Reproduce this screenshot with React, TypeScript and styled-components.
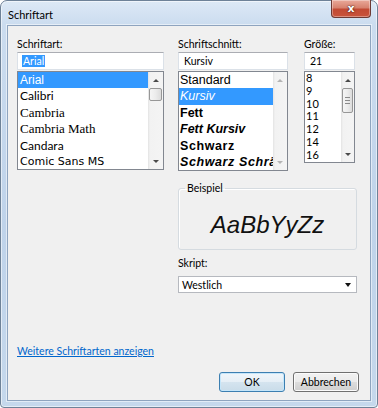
import React from 'react'
import styled, { createGlobalStyle } from 'styled-components'

const UI_FONT = 'Lato, "Noto Sans", "Liberation Sans", sans-serif'

const GlobalStyle = createGlobalStyle`
    html, body {
        margin: 0;
        padding: 0;
        background: #ffffff;
    }
    body {
        width: 378px;
        height: 408px;
        overflow: hidden;
        font-family: ${UI_FONT};
        font-size: 10.5px;
        color: #000000;
    }
`

const Window = styled.div`
    width: 378px;
    height: 408px;
    box-sizing: border-box;
    display: flex;
    flex-direction: column;
    border: 1px solid #6e8298;
    border-radius: 7px 7px 4px 4px;
    background: linear-gradient(180deg, #dde9f6 0%, #cbdcef 24px, #bfd3ea 55%, #c5d8ec 100%);
    box-shadow: inset 0 0 0 1px rgba(255, 255, 255, 0.55);
`

const TitleBar = styled.div`
    height: 24px;
    display: flex;
    align-items: flex-start;
`

const Title = styled.div`
    padding: 6px 0 0 7px;
    line-height: 15px;
    font-size: 11px;
    color: #000000;
`

const CloseButton = styled.div`
    margin: -1px 6px 0 auto;
    width: 40px;
    height: 18px;
    box-sizing: border-box;
    display: flex;
    align-items: center;
    justify-content: center;
    border: 1px solid #6d3a35;
    border-top: none;
    border-radius: 0 0 4px 4px;
    background: linear-gradient(180deg, #e9a99a 0%, #d7826f 45%, #c24a34 55%, #c9543c 100%);
    box-shadow: inset 0 0 0 1px rgba(255, 255, 255, 0.35);
    color: #ffffff;
    font-family: "DejaVu Sans", sans-serif;
    font-weight: bold;
    font-size: 11px;
    line-height: 1;
    text-shadow: 0 0 2px #4b1a12, 0 0 1px #4b1a12;
`

const Client = styled.div`
    flex: 1;
    margin: 0 6px 6px 6px;
    display: flex;
    flex-direction: column;
    padding: 11px 11px 8px 9px;
    background: #f0f0f0;
    border: 1px solid #8ea4bf;
    box-shadow: 0 0 0 1px rgba(255, 255, 255, 0.5);
`

const TopRow = styled.div`
    display: flex;
    align-items: flex-start;
`

const Column = styled.div<{ $width: number; $gap?: number }>`
    width: ${p => p.$width}px;
    margin-left: ${p => p.$gap ?? 0}px;
    display: flex;
    flex-direction: column;
`

const Label = styled.div<{ $space?: number }>`
    line-height: 15px;
    margin-bottom: ${p => p.$space ?? 0}px;
`

const TextBox = styled.div`
    height: 18px;
    box-sizing: border-box;
    padding-left: 5px;
    display: flex;
    align-items: center;
    background: #ffffff;
    border: 1px solid #dbe1e8;
    border-top-color: #abadb3;
`

const Highlight = styled.span`
    background: #3399ff;
    color: #ffffff;
    padding: 0 1px;
    margin-left: -1px;
`

const ListBox = styled.div<{ $height: number }>`
    margin-top: 1px;
    height: ${p => p.$height}px;
    box-sizing: border-box;
    display: flex;
    background: #ffffff;
    border: 1px solid #828790;
    overflow: hidden;
`

const ListItems = styled.div`
    flex: 1;
    min-width: 0;
    overflow: hidden;
`

const ListItem = styled.div<{
    $family: string
    $size: number
    $row: number
    $selected?: boolean
    $italic?: boolean
    $weight?: number
    $spacing?: number
    $pad?: number
}>`
    height: ${p => p.$row}px;
    line-height: ${p => p.$row}px;
    padding-left: ${p => p.$pad ?? 2}px;
    white-space: nowrap;
    overflow: hidden;
    font-family: ${p => p.$family};
    font-size: ${p => p.$size}px;
    font-style: ${p => (p.$italic ? 'italic' : 'normal')};
    font-weight: ${p => p.$weight ?? 400};
    letter-spacing: ${p => p.$spacing ?? 0}px;
    background: ${p => (p.$selected ? '#3399ff' : 'transparent')};
    color: ${p => (p.$selected ? '#ffffff' : '#000000')};
`

const ScrollBar = styled.div<{ $width: number }>`
    width: ${p => p.$width}px;
    display: flex;
    flex-direction: column;
    background: linear-gradient(90deg, #e3e3e3 0, #f2f2f2 2px, #f4f4f4 100%);
`

const ScrollButton = styled.div`
    height: 16px;
    display: flex;
    align-items: center;
    justify-content: center;
`

const Arrow = styled.div<{ $down?: boolean; $dim?: boolean }>`
    width: 0;
    height: 0;
    border-left: 3px solid transparent;
    border-right: 3px solid transparent;
    ${p => (p.$down ? 'border-top' : 'border-bottom')}: 3px solid ${p => (p.$dim ? '#b4b4b4' : '#4a4a4a')};
`

const Thumb = styled.div<{ $height: number }>`
    height: ${p => p.$height}px;
    margin: 0 1px;
    box-sizing: border-box;
    display: flex;
    flex-direction: column;
    align-items: center;
    justify-content: center;
    gap: 2px;
    border: 1px solid #979797;
    border-radius: 2px;
    background: linear-gradient(90deg, #f5f5f5 0%, #ececec 50%, #dcdcdc 100%);
`

const Grip = styled.div`
    width: 5px;
    height: 1px;
    background: #8a8a8a;
`

const TrackFill = styled.div`
    flex: 1;
`

const LowerPanel = styled.div`
    margin: 11px 0 0 161px;
    width: 179px;
    display: flex;
    flex-direction: column;
`

const Group = styled.fieldset`
    margin: 0;
    padding: 0 6px;
    height: 68px;
    box-sizing: border-box;
    min-width: 0;
    border: 1px solid #d5dbe0;
    border-radius: 3px;
    box-shadow: inset 1px 1px 0 #ffffff;
`

const GroupTitle = styled.legend`
    padding: 0 2px;
    margin-left: 0;
    line-height: 13px;
    font-size: 10.5px;
`

const Sample = styled.div`
    height: 54px;
    box-sizing: border-box;
    padding-top: 5px;
    display: flex;
    align-items: center;
    justify-content: center;
    font-family: "Liberation Sans", Arial, sans-serif;
    font-style: italic;
    font-size: 24px;
    color: #111111;
`

const Select = styled.div`
    height: 17px;
    box-sizing: border-box;
    display: flex;
    align-items: center;
    justify-content: space-between;
    padding: 0 5px 0 3px;
    background: #ffffff;
    border: 1px solid #b6b9bf;
`

const SelectArrow = styled.div`
    width: 0;
    height: 0;
    border-left: 3.5px solid transparent;
    border-right: 3.5px solid transparent;
    border-top: 4px solid #111111;
`

const Spacer = styled.div`
    flex: 1;
`

const MoreLink = styled.a`
    align-self: flex-start;
    line-height: 15px;
    color: #0066cc;
    text-decoration: underline;
    cursor: pointer;
`

const ButtonRow = styled.div`
    margin-top: 13px;
    display: flex;
    justify-content: flex-end;
    gap: 8px;
`

const Button = styled.button<{ $primary?: boolean }>`
    width: 66px;
    height: 20px;
    padding: 0;
    font-family: ${UI_FONT};
    font-size: 10.5px;
    color: #000000;
    border-radius: 3px;
    border: 1px solid ${p => (p.$primary ? '#3c7fb1' : '#707070')};
    background: ${p =>
        p.$primary
            ? 'linear-gradient(180deg, #f0f6fa 0%, #e6eff6 48%, #d5e4ef 50%, #c9dce9 100%)'
            : 'linear-gradient(180deg, #f2f2f2 0%, #ebebeb 48%, #dddddd 50%, #cfcfcf 100%)'};
    box-shadow: inset 0 0 0 1px ${p => (p.$primary ? '#c5e6fa' : '#fbfbfb')};
`

const SANS = '"Liberation Sans", Arial, sans-serif'

const fonts = [
    { name: 'Arial', family: SANS, size: 12 },
    { name: 'Calibri', family: 'Lato, sans-serif', size: 12 },
    { name: 'Cambria', family: '"Liberation Serif", serif', size: 13 },
    { name: 'Cambria Math', family: '"Liberation Serif", serif', size: 13 },
    { name: 'Candara', family: 'Lato, sans-serif', size: 12 },
    { name: 'Comic Sans MS', family: '"DejaVu Sans", sans-serif', size: 11 },
]

const styles = [
    { name: 'Standard' },
    { name: 'Kursiv', italic: true },
    { name: 'Fett', weight: 700 },
    { name: 'Fett Kursiv', weight: 700, italic: true },
    { name: 'Schwarz', weight: 900, spacing: 0.6 },
    { name: 'Schwarz Schräg', weight: 900, italic: true, spacing: 0.6 },
]

const sizes = ['8', '9', '10', '11', '12', '14', '16']

const Scroll: React.FC<{ width: number; thumb?: number; grip?: boolean; dim?: boolean }> = ({ width, thumb, grip, dim }) => (
    <ScrollBar $width={width}>
        <ScrollButton><Arrow $dim={dim} /></ScrollButton>
        {thumb && (
            <Thumb $height={thumb}>
                {grip && (<><Grip /><Grip /><Grip /></>)}
            </Thumb>
        )}
        <TrackFill />
        <ScrollButton><Arrow $down $dim={dim} /></ScrollButton>
    </ScrollBar>
)

export default function App() {
    return (
        <>
            <GlobalStyle />
            <Window>
                <TitleBar>
                    <Title>Schriftart</Title>
                    <CloseButton>x</CloseButton>
                </TitleBar>
                <Client>
                    <TopRow>
                        <Column $width={147}>
                            <Label>Schriftart:</Label>
                            <TextBox><Highlight>Arial</Highlight></TextBox>
                            <ListBox $height={99}>
                                <ListItems>
                                    {fonts.map((f, i) => (
                                        <ListItem key={f.name} $family={f.family} $size={f.size} $row={16.4} $selected={i === 0}>
                                            {f.name}
                                        </ListItem>
                                    ))}
                                </ListItems>
                                <Scroll width={15} thumb={13} />
                            </ListBox>
                        </Column>
                        <Column $width={110} $gap={14}>
                            <Label>Schriftschnitt:</Label>
                            <TextBox>Kursiv</TextBox>
                            <ListBox $height={100}>
                                <ListItems>
                                    {styles.map((s, i) => (
                                        <ListItem
                                            key={s.name}
                                            $family={SANS}
                                            $size={12.5}
                                            $row={16.4}
                                            $pad={1}
                                            $selected={i === 1}
                                            $italic={s.italic}
                                            $weight={s.weight}
                                            $spacing={s.spacing}
                                        >
                                            {s.name}
                                        </ListItem>
                                    ))}
                                </ListItems>
                                <Scroll width={14} dim />
                            </ListBox>
                        </Column>
                        <Column $width={51} $gap={16}>
                            <Label>Größe:</Label>
                            <TextBox>21</TextBox>
                            <ListBox $height={92}>
                                <ListItems>
                                    {sizes.map(s => (
                                        <ListItem key={s} $family={UI_FONT} $size={11} $row={12.8} $pad={1}>
                                            {s}
                                        </ListItem>
                                    ))}
                                </ListItems>
                                <Scroll width={13} thumb={25} grip />
                            </ListBox>
                        </Column>
                    </TopRow>
                    <LowerPanel>
                        <Group>
                            <GroupTitle>Beispiel</GroupTitle>
                            <Sample>AaBbYyZz</Sample>
                        </Group>
                        <Label style={{ marginTop: 6 }} $space={5}>Skript:</Label>
                        <Select>
                            <span>Westlich</span>
                            <SelectArrow />
                        </Select>
                    </LowerPanel>
                    <Spacer />
                    <MoreLink>Weitere Schriftarten anzeigen</MoreLink>
                    <ButtonRow>
                        <Button $primary>OK</Button>
                        <Button>Abbrechen</Button>
                    </ButtonRow>
                </Client>
            </Window>
        </>
    )
}
